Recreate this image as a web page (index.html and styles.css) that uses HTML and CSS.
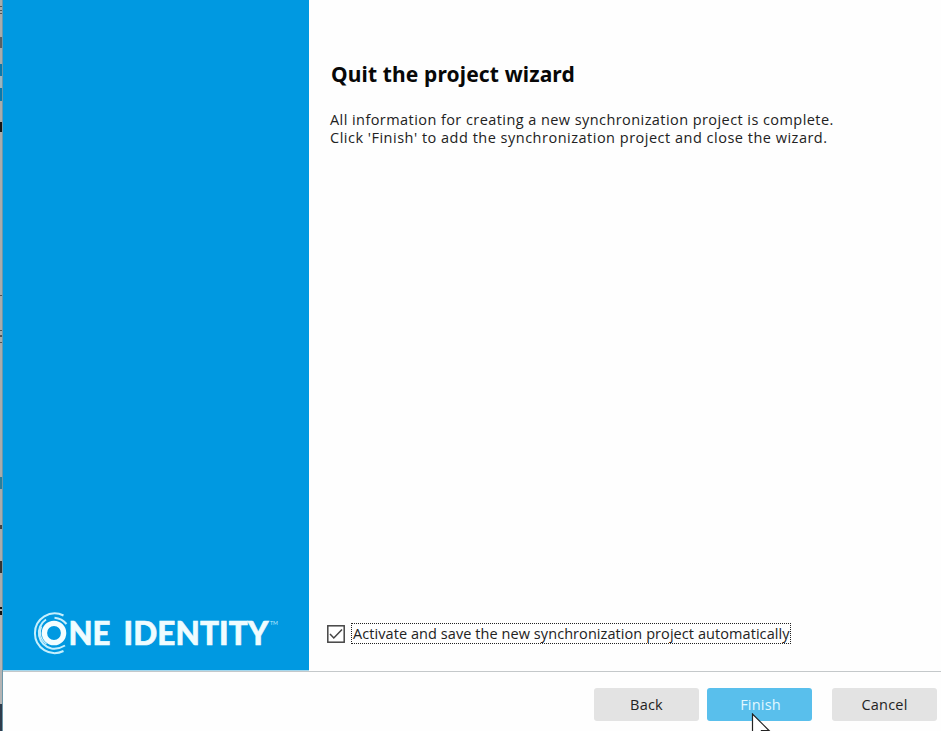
FILE: index.html
```html
<!DOCTYPE html>
<html lang="en">
<head>
<meta charset="utf-8">
<title>Project wizard</title>
<link rel="stylesheet" href="styles.css">
</head>
<body>
<div class="screen">
  <div class="backdrop"></div>
  <main class="wizard">
    <div class="body">
      <aside class="brand">
        <svg class="logo" width="250" height="48" viewBox="0 0 250 48" role="img" aria-label="One Identity">
          <g class="rings">
            <circle class="o" cx="23" cy="24" r="9.600"/>
            <path d="M32.500 6.500A19.800 19.800 0 1 0 32.500 42"/>
            <path d="M23.500 8.700Q31 9.500 35.500 15"/>
            <path d="M15 10.500A16 16 0 0 0 20.500 39.500Q27.500 40.500 34 36.500"/>
            <path class="fine" d="M10.500 17.500A14 14 0 0 0 15.500 35"/>
          </g>
          <text class="word" x="37.500" y="36" textLength="42" lengthAdjust="spacingAndGlyphs">NE</text>
          <text class="word" x="92.500" y="36" textLength="145" lengthAdjust="spacing">IDENTITY</text>
          <text class="tm" x="239" y="16" textLength="8" lengthAdjust="spacingAndGlyphs">TM</text>
        </svg>
      </aside>
      <section class="content">
        <h1>Quit the project wizard</h1>
        <p class="l1">All information for creating a new synchronization project is complete.</p>
        <p class="l2">Click 'Finish' to add the synchronization project and close the wizard.</p>
        <div class="option">
          <svg class="check" width="18" height="18" viewBox="0 0 18 18"><rect x=".8" y=".8" width="16.400" height="16.400"/><path d="M3 9l3.800 4L15 4.500"/></svg>
          <span class="label">Activate and save the new synchronization project automatically</span>
        </div>
      </section>
    </div>
    <footer class="actions">
      <button>Back</button>
      <button class="primary">Finish</button>
      <button class="cancel">Cancel</button>
    </footer>
  </main>
  <svg class="cursor" width="22" height="30" viewBox="0 0 22 30"><path d="M1.500 1v23l5.500-5 4 8 3-1.500-3.500-8h7.500z"/></svg>
</div>
</body>
</html>
```
FILE: styles.css
```css
* { box-sizing: border-box; }
body { margin: 0; font-family: "Open Sans", "Noto Sans", sans-serif; color: #222; }
.screen { position: relative; display: flex; width: 941px; height: 731px; overflow: hidden; background: #fefefe; }
.backdrop {
  width: 3px;
  border-right: 1px solid #6c98aa;
  background: linear-gradient(#a9abaa 0 6px, #555 6px 7px, #a9abaa 7px 10px, #555 10px 11px, #a9abaa 11px 13px, #555 13px 14px, #a9abaa 14px 37px, #596064 37px 48px, #a9abaa 48px 64px, #0879ad 64px 76px, #9bb5c0 76px 88px, #0879ad 88px 101px, #a9abaa 101px 122px, #151515 122px 132px, #a9abaa 132px 295px, #555 295px 296px, #a9abaa 296px 330px, #555 330px 331px, #a9abaa 331px 335px, #555 335px 337px, #a9abaa 337px 342px, #555 342px 343px, #a9abaa 343px 477px, #287f9c 477px 489px, #a9abaa 489px 525px, #444 525px 529px, #a9abaa 529px 561px, #333 561px 573px, #a9abaa 573px 607px, #111 607px 609px, #a9abaa 609px 611px, #111 611px 615px, #b4b4b4 615px 704px, #2f3c4c 704px);
}
.wizard { flex: 1; display: flex; flex-direction: column; }
.body { display: flex; height: 672px; border-bottom: 1px solid #c4c8ca; }
.brand { width: 306px; background: #0099e1; border-bottom: 1px solid #a5d8ee; display: flex; align-items: flex-end; padding: 0 0 13px 28px; }
.logo { overflow: visible; }
.rings { fill: none; stroke: #c5effd; stroke-width: 2; }
.rings .o { stroke: #f2fdff; stroke-width: 5.400; }
.rings .fine { stroke-width: 1.3; }
.word { font: 900 31.5px Lato, sans-serif; fill: #effcff; stroke: #effcff; stroke-width: .6; }
.tm { font: 5px Lato, sans-serif; fill: #bdeaff; }
.content { flex: 1; display: flex; flex-direction: column; padding: 60px 0 27px 22px; }
h1 { margin: 0 0 23px; font-family: "Noto Sans", sans-serif; font-size: 21px; line-height: 28px; font-weight: 700; letter-spacing: .13px; color: #080808; white-space: nowrap; }
p { margin: 0 0 0 -1px; font-size: 14.5px; line-height: 18px; white-space: nowrap; }
.l1 { letter-spacing: .43px; }
.l2 { letter-spacing: .5px; }
.option { margin-top: auto; display: flex; align-items: center; margin-left: -4px; }
.check { fill: #fff; stroke: #444; stroke-width: 1.5; }
.check path { fill: none; }
.label { margin-left: 6px; width: 440px; height: 21px; border: 1px dotted #222; padding-left: 1px; font-size: 14.5px; line-height: 20px; letter-spacing: .07px; white-space: nowrap; }
.actions { flex: 1; display: flex; justify-content: flex-end; padding: 16px 4px 0 0; gap: 8px; }
button { width: 105px; height: 33px; padding: 0; border: 0; border-radius: 3px; background: #e3e3e3; color: #222; font: 14.5px/31px "Open Sans", sans-serif; letter-spacing: .2px; }
.primary { background: #59bfec; color: #e2f8ff; padding-left: 2px; }
.cancel { margin-left: 12px; }
.cursor { position: absolute; left: 751px; top: 713px; fill: #fff; stroke: #222; stroke-width: 1.200; }
```
